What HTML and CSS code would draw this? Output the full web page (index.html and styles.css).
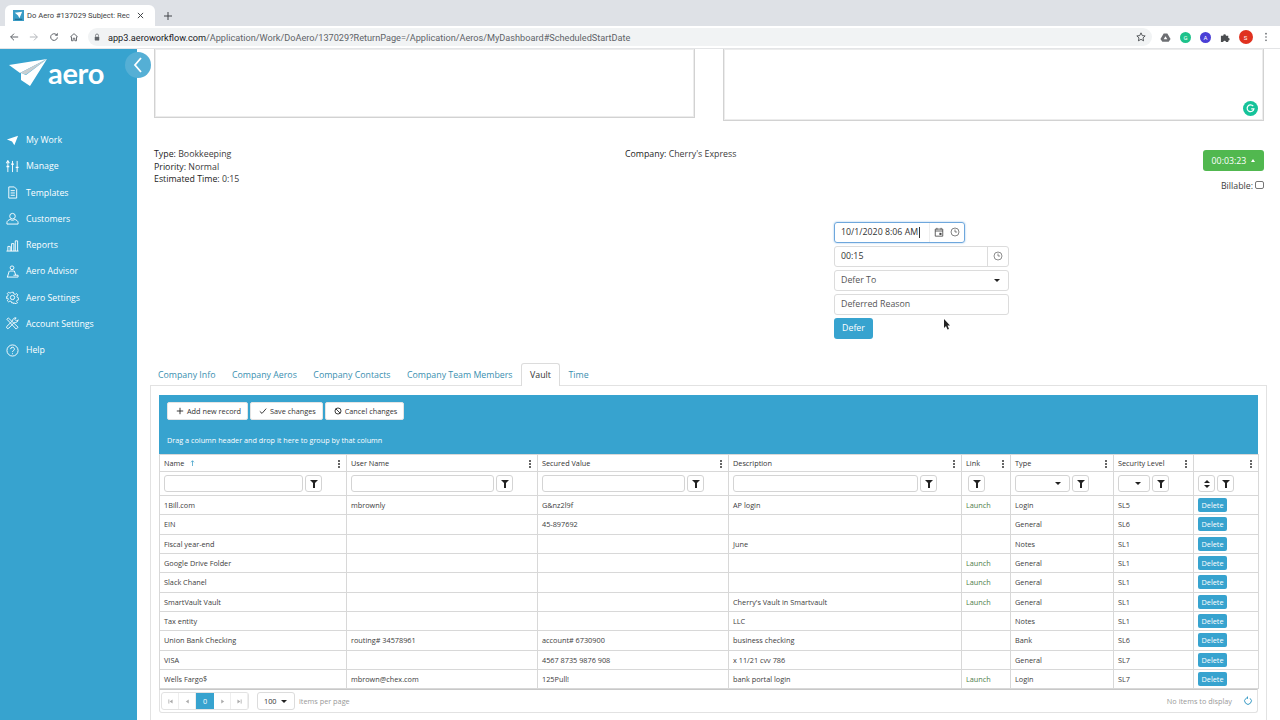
FILE: index.html
```html
<!DOCTYPE html>
<html>
  <head>
    <meta charset="UTF-8" />
    <title>Do Aero #137029</title>
    <link rel="stylesheet" href="styles.css">
  </head>
  <body>
    <div class="browser-top">
      <div class="tab-strip">
        <div class="tab">
          <svg class="favicon" viewBox="0 0 12 12"><rect width="12" height="12" fill="#3a9cc6"/><path d="M2 3l8-1-3 7-1.500-3z" fill="#fff"/><rect x="2" y="9.500" width="8" height="1.500" fill="#1f6f93"/></svg>
          <span class="tab-title">Do Aero #137029 Subject: Rec</span>
          <svg class="tab-close" viewBox="0 0 8 8"><path d="M1 1l6 6M7 1L1 7" stroke="#3c4043" stroke-width="1.100"/></svg>
        </div>
        <svg class="new-tab" viewBox="0 0 10 10"><path d="M5 0v10M0 5h10" stroke="#3c4043" stroke-width="1.200"/></svg>
      </div>
      <div class="toolbar">
        <svg class="nav-icon" viewBox="0 0 12 12"><path d="M11 6H2M6 2L2 6l4 4" fill="none" stroke="#5f6368" stroke-width="1.200"/></svg>
        <svg class="nav-icon" viewBox="0 0 12 12"><path d="M1 6h9M6 2l4 4-4 4" fill="none" stroke="#b4b7bb" stroke-width="1.200"/></svg>
        <svg class="nav-icon" viewBox="0 0 12 12"><path d="M10 6.500A4 4 0 1 1 8.800 3.200" fill="none" stroke="#5f6368" stroke-width="1.200"/><path d="M10.500 1v3.500H7z" fill="#5f6368"/></svg>
        <svg class="nav-icon" viewBox="0 0 12 12"><path d="M1.500 6L6 2l4.500 4M3 5.500V10.500h2V7.500h2v3h2V5.500" fill="none" stroke="#5f6368" stroke-width="1.100"/></svg>
        <div class="address">
          <svg class="lock" viewBox="0 0 8 10"><path d="M2 4.500V3a2 2 0 0 1 4 0v1.500" fill="none" stroke="#5f6368"/><rect x="1" y="4.500" width="6" height="5" rx=".6" fill="#5f6368"/></svg>
          <span class="url"><b>app3.aeroworkflow.com</b>/Application/Work/DoAero/137029?ReturnPage=/Application/Aeros/MyDashboard#ScheduledStartDate</span>
          <svg class="star" viewBox="0 0 12 12"><path d="M6 1l1.500 3.300 3.500.4-2.600 2.400.7 3.500L6 8.800l-3.100 1.800.7-3.500L1 4.700l3.500-.4z" fill="none" stroke="#3c4043"/></svg>
        </div>
        <div class="extensions">
          <svg class="ext" viewBox="0 0 12 12"><path d="M4 1.500h4l3.500 6-2 3h-7l-2-3z" fill="#6d6f73"/><path d="M6 4.500l2 3.500H4z" fill="#fff"/></svg>
          <span class="ext-dot ext-green">G</span>
          <span class="ext-dot ext-blue">A</span>
          <svg class="ext" viewBox="0 0 12 12"><path d="M1 4h2.500a1.500 1.500 0 0 1 3 0H9v2.500a1.500 1.500 0 0 1 0 3V11H6.500a1.500 1.500 0 0 0-3 0H1z" fill="#4b4d50"/></svg>
          <span class="ext-dot ext-red">S</span>
          <svg class="ext-menu" viewBox="0 0 4 12"><circle cx="2" cy="2" r="1" fill="#5f6368"/><circle cx="2" cy="6" r="1" fill="#5f6368"/><circle cx="2" cy="10" r="1" fill="#5f6368"/></svg>
        </div>
      </div>
    </div>

    <div class="app">
      <aside class="sidebar">
        <div class="logo">
          <svg class="logo-plane" viewBox="0 0 38 27"><path d="M0 6L38 0 11 14z" fill="#fff"/><path d="M38 0L11 14l6 1.500z" fill="#c9cfd2"/><path d="M38 0L17 16l-5-2v7l9 6z" fill="#fff"/></svg>
          <span class="logo-text">aero</span>
        </div>
        <nav class="side-nav">
          <a class="side-link"><svg viewBox="0 0 14 14"><path d="M1 6l12-4-4 10-2.500-4z" fill="#fff"/></svg>My Work</a>
          <a class="side-link"><svg viewBox="0 0 14 14" fill="none" stroke="#fff"><path d="M2 3v10M7 1v12M12 1v12"/><path d="M.5 3.500L2 1l1.500 2.500M.5 7h3M5.500 4.500h3M10.500 8h3" stroke-width="1.400"/></svg>Manage</a>
          <a class="side-link"><svg viewBox="0 0 14 14" fill="none" stroke="#fff"><path d="M3 1h6l2.500 2.500V13H3z"/><path d="M5 5h4.500M5 7.500h4.500M5 10h4.500"/></svg>Templates</a>
          <a class="side-link"><svg viewBox="0 0 14 14" fill="none" stroke="#fff"><circle cx="7" cy="4.500" r="3"/><path d="M1 13v-1.500C1 9.500 3 8.500 4.500 8c1.500 1.200 3.500 1.200 5 0 1.500.5 3.500 1.500 3.500 3.500V13z"/></svg>Customers</a>
          <a class="side-link"><svg viewBox="0 0 14 14" fill="none" stroke="#fff"><path d="M.5 13h13M2 13V8h2.500v5M6 13V5h2.500v8M10 13V2h2.500v11"/></svg>Reports</a>
          <a class="side-link"><svg viewBox="0 0 14 14" fill="none" stroke="#fff"><circle cx="6.500" cy="3" r="2"/><path d="M4 6.500h5l1.500 4.500M1.500 13l2-6.500M1 13h12v-2H8"/></svg>Aero Advisor</a>
          <a class="side-link"><svg viewBox="0 0 14 14" fill="none" stroke="#fff"><circle cx="7" cy="7" r="2.300"/><path d="M6 1h2l.4 1.800 1.600.7 1.600-1 1.300 1.400-1 1.600.6 1.500 1.500.5v2l-1.800.4-.6 1.500 1 1.600-1.400 1.300-1.600-1-1.500.6L8 13H6l-.4-1.500-1.500-.6-1.600 1-1.400-1.300 1-1.600-.6-1.500L0 8V6l1.500-.5.600-1.500-1-1.600L2.500 1l1.600 1 1.500-.6z" transform="translate(.4 .4) scale(.95)"/></svg>Aero Settings</a>
          <a class="side-link"><svg viewBox="0 0 14 14" fill="none" stroke="#fff"><path d="M1 2.500L2.500 1l10.500 10-2 2z"/><path d="M13 3a3 3 0 0 1-4 2.800L3 12a1.400 1.400 0 0 1-2-2l6.200-6A3 3 0 0 1 11 1L9.500 2.500l2 2z"/></svg>Account Settings</a>
          <a class="side-link"><svg viewBox="0 0 14 14" fill="none" stroke="#fff"><circle cx="7" cy="7" r="6"/><path d="M5 5.500a2 2 0 1 1 3 1.700c-.7.400-1 .8-1 1.500"/><path d="M7 10v1"/></svg>Help</a>
        </nav>
      </aside>
      <button class="collapse"><svg viewBox="0 0 10 16"><path d="M8 1L2 8l6 7" fill="none" stroke="#fff" stroke-width="1.800"/></svg></button>

      <main class="content">
        <div class="note-row">
          <div class="note-box note-left"></div>
          <div class="note-box note-right"><span class="grammarly"><svg viewBox="0 0 12 12"><path d="M9 3.500A3.700 3.700 0 1 0 9.700 6.500H6.800" fill="none" stroke="#fff" stroke-width="1.300"/></svg></span></div>
        </div>

        <div class="info-row">
          <div class="info-left">
            <div><b>Type:</b> Bookkeeping</div>
            <div><b>Priority:</b> Normal</div>
            <div><b>Estimated Time:</b> 0:15</div>
          </div>
          <div class="info-company"><b>Company:</b> Cherry's Express</div>
          <div class="info-right">
            <button class="timer">00:03:23<span class="caret-up"></span></button>
            <label class="billable">Billable:<span class="check"></span></label>
          </div>
        </div>

        <div class="defer-form">
          <div class="date-field">
            <span class="date-value">10/1/2020 8:06 AM<i class="text-caret"></i></span>
            <span class="date-icons">
              <svg viewBox="0 0 12 12"><path d="M1.500 2.500h9v8.500h-9zM1.500 4.800h9M3.500 1v2M8.500 1v2" fill="none" stroke="#444"/><rect x="6.500" y="7" width="2.500" height="2.500" fill="#444"/></svg>
              <svg viewBox="0 0 12 12"><circle cx="6" cy="6" r="4.800" fill="none" stroke="#444" stroke-width=".8"/><path d="M6 3v3h2.500" fill="none" stroke="#444" stroke-width=".8"/></svg>
            </span>
          </div>
          <div class="form-field time-field">
            <span>00:15</span>
            <span class="time-icon"><svg viewBox="0 0 12 12"><circle cx="6" cy="6" r="4.800" fill="none" stroke="#555" stroke-width=".8"/><path d="M6 3v3h2.500" fill="none" stroke="#555" stroke-width=".8"/></svg></span>
          </div>
          <div class="form-field select-field"><span>Defer To</span><span class="caret-down"></span></div>
          <div class="form-field"><span>Deferred Reason</span></div>
          <button class="defer-btn">Defer</button>
          <svg class="cursor" viewBox="0 0 8 12"><path d="M1 0v9l2-2 1.500 3.500 1.500-.6L4.500 6.500H7z" fill="#222"/></svg>
        </div>

        <div class="tabs">
          <a class="tab-link">Company Info</a>
          <a class="tab-link">Company Aeros</a>
          <a class="tab-link">Company Contacts</a>
          <a class="tab-link">Company Team Members</a>
          <a class="tab-link active">Vault</a>
          <a class="tab-link">Time</a>
        </div>

        <section class="tab-panel">
          <div class="grid">
            <div class="grid-toolbar">
              <div class="grid-buttons">
                <button class="tool-btn"><svg viewBox="0 0 10 10"><path d="M5 1v8M1 5h8" stroke="#222" stroke-width="1.100"/></svg>Add new record</button>
                <button class="tool-btn"><svg viewBox="0 0 10 10"><path d="M1 5.500L3.800 8 9 2" fill="none" stroke="#222" stroke-width="1.100"/></svg>Save changes</button>
                <button class="tool-btn"><svg viewBox="0 0 10 10"><circle cx="5" cy="5" r="3.800" fill="none" stroke="#222" stroke-width="1.100"/><path d="M2.300 2.300l5.400 5.400" stroke="#222" stroke-width="1.100"/></svg>Cancel changes</button>
              </div>
              <div class="group-hint">Drag a column header and drop it here to group by that column</div>
            </div>
            <table class="vault">
              <colgroup>
                <col class="c-name"><col class="c-user"><col class="c-secured"><col class="c-desc"><col class="c-link"><col class="c-type"><col class="c-level"><col class="c-action">
              </colgroup>
              <thead>
                <tr class="head-row">
                  <th><span class="head-label">Name <svg class="sort" viewBox="0 0 6 8"><path d="M3 8V1M1 3l2-2 2 2" fill="none" stroke="#3a9cc6"/></svg></span><i class="kebab"></i></th>
                  <th><span class="head-label">User Name</span><i class="kebab"></i></th>
                  <th><span class="head-label">Secured Value</span><i class="kebab"></i></th>
                  <th><span class="head-label">Description</span><i class="kebab"></i></th>
                  <th><span class="head-label">Link</span><i class="kebab"></i></th>
                  <th><span class="head-label">Type</span><i class="kebab"></i></th>
                  <th><span class="head-label">Security Level</span><i class="kebab"></i></th>
                  <th><span class="head-label"></span><i class="kebab"></i></th>
                </tr>
                <tr class="filter-row">
                  <td><div class="filter"><span class="f-input"></span><span class="f-btn"><i class="funnel"></i></span></div></td>
                  <td><div class="filter"><span class="f-input"></span><span class="f-btn"><i class="funnel"></i></span></div></td>
                  <td><div class="filter"><span class="f-input"></span><span class="f-btn"><i class="funnel"></i></span></div></td>
                  <td><div class="filter"><span class="f-input"></span><span class="f-btn"><i class="funnel"></i></span></div></td>
                  <td class="filter-link"><div class="filter"><span class="f-btn"><i class="funnel"></i></span></div></td>
                  <td><div class="filter"><span class="f-input f-select"><span class="caret-down small"></span></span><span class="f-btn"><i class="funnel"></i></span></div></td>
                  <td><div class="filter"><span class="f-input f-select"><span class="caret-down small"></span></span><span class="f-btn"><i class="funnel"></i></span></div></td>
                  <td><div class="filter"><span class="f-btn f-sort"><span class="caret-up dark"></span><span class="caret-down small"></span></span><span class="f-btn"><i class="funnel"></i></span></div></td>
                </tr>
              </thead>
              <tbody>
                <tr><td>1Bill.com</td><td>mbrownly</td><td>G&amp;nz2l9f</td><td>AP login</td><td class="launch">Launch</td><td>Login</td><td>SL5</td><td><button class="delete">Delete</button></td></tr>
                <tr><td>EIN</td><td></td><td>45-897692</td><td></td><td></td><td>General</td><td>SL6</td><td><button class="delete">Delete</button></td></tr>
                <tr><td>Fiscal year-end</td><td></td><td></td><td>June</td><td></td><td>Notes</td><td>SL1</td><td><button class="delete">Delete</button></td></tr>
                <tr><td>Google Drive Folder</td><td></td><td></td><td></td><td class="launch">Launch</td><td>General</td><td>SL1</td><td><button class="delete">Delete</button></td></tr>
                <tr><td>Slack Chanel</td><td></td><td></td><td></td><td class="launch">Launch</td><td>General</td><td>SL1</td><td><button class="delete">Delete</button></td></tr>
                <tr><td>SmartVault Vault</td><td></td><td></td><td>Cherry's Vault in Smartvault</td><td class="launch">Launch</td><td>General</td><td>SL1</td><td><button class="delete">Delete</button></td></tr>
                <tr><td>Tax entity</td><td></td><td></td><td>LLC</td><td></td><td>Notes</td><td>SL1</td><td><button class="delete">Delete</button></td></tr>
                <tr><td>Union Bank Checking</td><td>routing# 34578961</td><td>account# 6730900</td><td>business checking</td><td></td><td>Bank</td><td>SL6</td><td><button class="delete">Delete</button></td></tr>
                <tr><td>VISA</td><td></td><td>4567 8735 9876 908</td><td>x 11/21 cvv 786</td><td></td><td>General</td><td>SL7</td><td><button class="delete">Delete</button></td></tr>
                <tr><td>Wells Fargo$</td><td>mbrown@chex.com</td><td>125Pull!</td><td>bank portal login</td><td class="launch">Launch</td><td>Login</td><td>SL7</td><td><button class="delete">Delete</button></td></tr>
              </tbody>
            </table>
            <div class="pager">
              <div class="pager-nums">
                <span class="page-arrow"><svg viewBox="0 0 6 6"><path d="M1 .5v5" stroke="#aaa"/><path d="M5.500.5v5L2 3z" fill="#aaa"/></svg></span>
                <span class="page-arrow"><svg viewBox="0 0 6 6"><path d="M4.500.5v5L1 3z" fill="#aaa"/></svg></span>
                <span class="page-current">0</span>
                <span class="page-arrow"><svg viewBox="0 0 6 6"><path d="M1.500.5v5L5 3z" fill="#aaa"/></svg></span>
                <span class="page-arrow"><svg viewBox="0 0 6 6"><path d="M5 .5v5" stroke="#aaa"/><path d="M.5.5v5L4 3z" fill="#aaa"/></svg></span>
              </div>
              <div class="page-size"><span>100</span><span class="caret-down small"></span></div>
              <span class="page-label">items per page</span>
              <span class="page-info">No items to display</span>
              <svg class="refresh" viewBox="0 0 12 12"><path d="M8.500 2.800A4 4 0 1 1 3.500 2.800" fill="none" stroke="#3a9cc6" stroke-width="1.200"/><path d="M6 0L3.500 2.800 6 3.500z" fill="#3a9cc6"/></svg>
            </div>
          </div>
        </section>
      </main>
    </div>
  </body>
</html>
```

FILE: styles.css
```css
* {
  box-sizing: border-box;
}

html,
body {
  height: 720px;
  margin: 0;
  overflow: hidden;
}

body {
  font-family: "Open Sans", sans-serif;
  font-size: 8.8px;
  color: #3c3c3c;
  background-color: white;
}

/* Browser chrome */
.browser-top {
  height: 49px;
  font-family: Roboto, sans-serif;
}

.tab-strip {
  height: 26px;
  display: flex;
  align-items: flex-end;
  padding-left: 5px;
  background-color: #dee1e6;
}

.tab {
  width: 150px;
  height: 21px;
  display: flex;
  align-items: center;
  padding: 0 8px;
  background-color: white;
  border-radius: 6px 6px 0 0;
  font-size: 7.6px;
  color: #3c4043;
}

.favicon {
  width: 11px;
  height: 11px;
  margin-right: 3px;
  flex-shrink: 0;
}

.tab-title {
  white-space: nowrap;
}

.tab-close {
  width: 7px;
  height: 7px;
  margin-left: auto;
  margin-right: 3px;
}

.new-tab {
  width: 8px;
  height: 8px;
  margin: 0 0 6px 9px;
}

.toolbar {
  height: 23px;
  display: flex;
  align-items: center;
  padding-left: 9px;
  background-color: white;
  border-bottom: 1px solid #e3e4e6;
}

.nav-icon {
  width: 10px;
  height: 10px;
  margin-right: 10px;
  flex-shrink: 0;
}

.address {
  width: 1064px;
  height: 18px;
  display: flex;
  align-items: center;
  margin-left: -1px;
  padding: 0 6px;
  background-color: #f1f3f4;
  border-radius: 9px;
}

.lock {
  width: 6px;
  height: 8px;
  margin-right: 8px;
}

.url {
  flex: 1;
  font-size: 9.17px;
  color: #5f6368;
  white-space: nowrap;
}

.url b {
  font-weight: 400;
  color: #202124;
}

.star {
  width: 10px;
  height: 10px;
}

.extensions {
  display: flex;
  align-items: center;
  gap: 9px;
  margin-left: 8px;
}

.ext {
  width: 11px;
  height: 11px;
}

.ext-dot {
  width: 11px;
  height: 11px;
  display: flex;
  align-items: center;
  justify-content: center;
  border-radius: 50%;
  font-size: 6px;
  color: white;
}

.ext-green {
  background-color: #1ec28b;
}

.ext-blue {
  background-color: #4a3fd6;
}

.ext-red {
  width: 14px;
  height: 14px;
  margin: 0 -1.5px;
  background-color: #e0311f;
}

.ext-menu {
  width: 4px;
  height: 10px;
  margin-left: 3.5px;
}

/* App frame */
.app {
  position: relative;
  display: flex;
  height: 671px;
}

.sidebar {
  width: 137px;
  flex-shrink: 0;
  background-color: #37a3cf;
}

.logo {
  height: 78px;
  display: flex;
  align-items: flex-start;
  padding: 10px 0 0 9px;
}

.logo-plane {
  width: 38px;
  height: 27px;
  flex-shrink: 0;
}

.logo-text {
  font-family: Lato, sans-serif;
  font-size: 29px;
  line-height: 30px;
  margin: -1px 0 0 1px;
  color: white;
  font-weight: 700;
  letter-spacing: -0.3px;
}

.side-nav {
  display: flex;
  flex-direction: column;
}

.side-link {
  height: 26.25px;
  display: flex;
  align-items: center;
  gap: 7px;
  padding-left: 6px;
  font-size: 8.75px;
  color: white;
}

.side-link svg {
  width: 13px;
  height: 13px;
  flex-shrink: 0;
}

.collapse {
  position: absolute;
  left: 125px;
  top: 3px;
  width: 26px;
  height: 26px;
  padding: 0;
  display: flex;
  align-items: center;
  justify-content: center;
  border: none;
  border-radius: 50%;
  background-color: #55afd5;
}

.collapse svg {
  width: 10px;
  height: 16px;
}

.content {
  flex: 1;
  min-width: 0;
  overflow: hidden;
  padding-left: 13px;
}

/* Top note boxes */
.note-row {
  display: flex;
  gap: 28px;
  padding: 0 15px 0 4px;
}

.note-box {
  border: 1px solid #d2d2d2;
  border-top: none;
  box-shadow: inset 0 0 0 1px #ececec;
}

.note-left {
  width: 541px;
  height: 69px;
}

.note-right {
  position: relative;
  width: 541px;
  height: 72px;
}

.grammarly {
  position: absolute;
  right: 5px;
  bottom: 4px;
  width: 15px;
  height: 15px;
  display: flex;
  align-items: center;
  justify-content: center;
  border-radius: 50%;
  background-color: #15c39a;
}

.grammarly svg {
  width: 11px;
  height: 11px;
}

/* Info row */
.info-row {
  height: 100px;
  display: flex;
  padding: 27px 16px 0 4px;
  line-height: 12.5px;
}

.info-left {
  width: 471px;
}

.info-row b {
  font-weight: 400;
  color: #1c1c1c;
}

.info-company {
  flex: 1;
}

.info-right {
  display: flex;
  flex-direction: column;
  align-items: flex-end;
  padding-top: 2px;
}

.timer {
  width: 61px;
  height: 21px;
  padding: 0;
  display: flex;
  align-items: center;
  justify-content: center;
  border: none;
  border-radius: 3px;
  background-color: #51b84f;
  color: white;
  font: 8.8px "Open Sans", sans-serif;
}

.caret-up {
  width: 0;
  height: 0;
  margin-left: 5px;
  border-left: 2.5px solid transparent;
  border-right: 2.5px solid transparent;
  border-bottom: 3px solid white;
}

.caret-up.dark {
  margin: 0;
  border-left-width: 3px;
  border-right-width: 3px;
  border-bottom: 3.5px solid #222;
}

.billable {
  display: flex;
  align-items: flex-start;
  gap: 2px;
  margin-top: 9px;
}

.check {
  width: 9px;
  height: 8px;
  margin-top: 1px;
  border: 1px solid #767676;
  border-radius: 2px;
}

/* Defer form */
.defer-form {
  position: relative;
  width: 175px;
  margin-left: 684px;
  height: 142px;
  padding-top: 0.5px;
  display: flex;
  flex-direction: column;
  align-items: flex-start;
  gap: 3.1px;
}

.date-field {
  width: 131px;
  height: 21px;
  display: flex;
  align-items: center;
  justify-content: space-between;
  padding-left: 6px;
  border: 1px solid #6ea7dc;
  border-radius: 3px;
  box-shadow: 0 0 2px #8fbce6;
  color: #333;
}

.date-value {
  flex: 1;
  height: 100%;
  display: flex;
  align-items: center;
  border-right: 1px solid #eee;
}

.text-caret {
  width: 1px;
  height: 11px;
  margin-left: 1px;
  background-color: #333;
}

.date-icons {
  display: flex;
  align-items: center;
  gap: 6px;
  padding: 0 4px;
}

.date-icons svg,
.time-icon svg {
  width: 10px;
  height: 10px;
  display: block;
}

.form-field {
  width: 175px;
  height: 21px;
  display: flex;
  align-items: center;
  padding-left: 6px;
  border: 1px solid #dcdcdc;
  border-radius: 3px;
  color: #555;
}

.time-field {
  justify-content: space-between;
  padding-right: 0;
  color: #333;
}

.time-icon {
  width: 21px;
  height: 100%;
  display: flex;
  align-items: center;
  justify-content: center;
  border-left: 1px solid #dcdcdc;
}

.select-field {
  justify-content: space-between;
  padding-right: 8px;
}

.caret-down {
  width: 0;
  height: 0;
  border-left: 3px solid transparent;
  border-right: 3px solid transparent;
  border-top: 3.5px solid #222;
}

.defer-btn {
  width: 39px;
  height: 21px;
  padding: 0;
  border: none;
  border-radius: 3px;
  background-color: #37a3cf;
  color: white;
  font: 8.8px "Open Sans", sans-serif;
}

.cursor {
  position: absolute;
  left: 109px;
  top: 98px;
  width: 8px;
  height: 12px;
}

/* Tabs */
.tabs {
  height: 23px;
  display: flex;
  align-items: stretch;
  gap: 0.5px;
  position: relative;
  z-index: 1;
}

.tab-link {
  display: flex;
  align-items: center;
  padding: 0 8px;
  color: #3a8fb0;
}

.tab-link.active {
  color: #333;
  background-color: white;
  border: 1px solid #dcdcdc;
  border-bottom: none;
  border-radius: 3px 3px 0 0;
  height: 23px;
}

.tab-panel {
  width: 1117px;
  height: 340px;
  margin-top: -1px;
  padding: 9px 8px;
  border: 1px solid #e2e2e2;
}

.grid-toolbar {
  height: 59px;
  padding: 7px 8px 0;
  background-color: #37a3cf;
}

.grid-buttons {
  display: flex;
  gap: 2px;
}

.tool-btn {
  height: 18px;
  display: flex;
  align-items: center;
  gap: 3px;
  padding: 0 6px 0 8px;
  border: 1px solid #e4e4e4;
  border-radius: 2px;
  background-color: white;
  color: #333;
  font: 7.3px "Open Sans", sans-serif;
}

.tool-btn svg {
  width: 8px;
  height: 8px;
}

.group-hint {
  margin-top: 15px;
  font-size: 7.25px;
  color: white;
}

/* Vault table */
.vault {
  width: 1099px;
  table-layout: fixed;
  border-collapse: collapse;
  font-size: 7.3px;
}

.c-name { width: 187px; }
.c-user { width: 191px; }
.c-secured { width: 191px; }
.c-desc { width: 233px; }
.c-link { width: 49px; }
.c-type { width: 103px; }
.c-level { width: 80px; }
.c-action { width: 65px; }

.vault th,
.vault td {
  padding: 0 4px;
  border: 1px solid #d8d8d8;
  text-align: left;
  white-space: nowrap;
  overflow: hidden;
}

.vault th {
  position: relative;
  height: 17px;
  font-weight: 400;
  color: #333;
}

.vault tbody td {
  height: 19.330px;
}

.vault .filter-row td {
  height: 24px;
  padding-right: 24px;
}

.vault .filter-row .filter-link {
  padding: 0 0 0 6px;
}

.head-label {
  display: inline-flex;
  align-items: center;
  gap: 3px;
}

.sort {
  width: 5px;
  height: 6px;
  margin-left: 3px;
}

.kebab {
  position: absolute;
  right: 6px;
  top: 5px;
  width: 2px;
  height: 2px;
  background-color: #333;
  box-shadow: 0 3px 0 #333, 0 6px 0 #333;
  border-radius: 50%;
}

.filter {
  display: flex;
  align-items: center;
  gap: 2px;
  height: 18px;
}

.f-input {
  flex: 1;
  height: 17px;
  display: flex;
  align-items: center;
  justify-content: flex-end;
  border: 1px solid #d4d4d4;
  border-radius: 3px;
}

.f-select {
  padding-right: 8px;
}

.f-btn {
  width: 17px;
  height: 17px;
  display: flex;
  align-items: center;
  justify-content: center;
  flex-shrink: 0;
  border: 1px solid #d4d4d4;
  border-radius: 3px;
}

.f-sort {
  flex-direction: column;
  gap: 2px;
}

.funnel {
  width: 0;
  height: 0;
  position: relative;
  border-left: 4px solid transparent;
  border-right: 4px solid transparent;
  border-top: 4px solid #222;
  margin-bottom: 3px;
}

.funnel:after {
  content: "";
  position: absolute;
  left: -1px;
  top: -1px;
  width: 2px;
  height: 5px;
  background-color: #222;
}

.launch {
  color: #4e7d48;
}

.delete {
  width: 29px;
  height: 14px;
  display: block;
  padding: 0;
  border: none;
  border-radius: 2px;
  background-color: #37a3cf;
  color: white;
  font: 7.3px "Open Sans", sans-serif;
}

/* Pager */
.pager {
  width: 1099px;
  height: 24px;
  display: flex;
  align-items: center;
  padding: 0 4px 0 1px;
  border: 1px solid #e2e2e2;
  border-top: 1px solid #c8c8c8;
  border-radius: 0 0 3px 3px;
  font-size: 7.3px;
  color: #999;
}

.pager-nums {
  display: flex;
  height: 18px;
  border: 1px solid #e2e2e2;
  border-radius: 3px;
}

.page-arrow {
  width: 17px;
  display: flex;
  align-items: center;
  justify-content: center;
  border-right: 1px solid #eee;
}

.page-arrow svg {
  width: 5px;
  height: 5px;
}

.page-current {
  width: 18px;
  display: flex;
  align-items: center;
  justify-content: center;
  background-color: #37a3cf;
  color: white;
}

.page-size {
  width: 38px;
  height: 18px;
  display: flex;
  align-items: center;
  justify-content: space-between;
  margin: 0 4px 0 8px;
  padding: 0 7px 0 6px;
  border: 1px solid #dcdcdc;
  border-radius: 3px;
  color: #333;
}

.page-info {
  margin-left: auto;
}

.refresh {
  width: 10px;
  height: 10px;
  margin-left: 11px;
}
```
